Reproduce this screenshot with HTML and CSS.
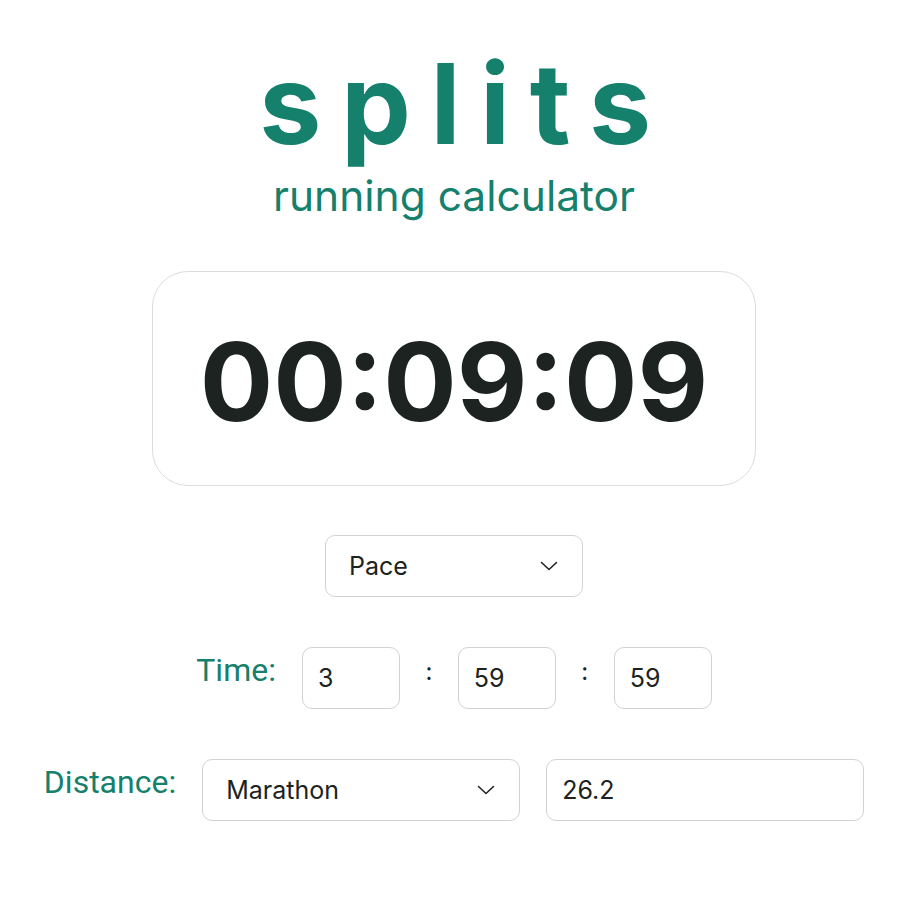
FILE: index.html
```html
<!DOCTYPE html>
<html lang="en">
<head>
<meta charset="utf-8">
<title>splits - running calculator</title>
<link rel="stylesheet" href="styles.css">
</head>
<body>
<main class="app">
  <header class="brand">
    <h1 class="logo">splits</h1>
    <p class="tagline">running calculator</p>
  </header>

  <section class="result">
    <span class="result-value">00:09:09</span>
  </section>

  <div class="select mode-select">
    <span class="select-text">Pace</span>
    <svg class="chevron" width="18" height="10" viewBox="0 0 18 10"><path d="M1.5 1.5 L9 8.5 L16.5 1.5" fill="none" stroke="#222" stroke-width="1.6" stroke-linecap="round" stroke-linejoin="round"/></svg>
  </div>

  <div class="row time-row">
    <label class="row-label">Time:</label>
    <div class="field small"><span class="field-text">3</span></div>
    <span class="colon">:</span>
    <div class="field small"><span class="field-text">59</span></div>
    <span class="colon">:</span>
    <div class="field small"><span class="field-text">59</span></div>
  </div>

  <div class="row distance-row">
    <label class="row-label">Distance:</label>
    <div class="select wide">
      <span class="select-text">Marathon</span>
      <svg class="chevron" width="18" height="10" viewBox="0 0 18 10"><path d="M1.5 1.5 L9 8.5 L16.5 1.5" fill="none" stroke="#222" stroke-width="1.6" stroke-linecap="round" stroke-linejoin="round"/></svg>
    </div>
    <div class="field wide"><span class="field-text">26.2</span></div>
  </div>
</main>
</body>
</html>
```

FILE: styles.css
```css
* { box-sizing: border-box; }

html, body {
  margin: 0;
  padding: 0;
  background: #ffffff;
}

body {
  font-family: Inter, "Noto Sans", sans-serif;
  color: #1c2321;
}

.app {
  display: flex;
  flex-direction: column;
  align-items: center;
  padding: 48px 0 0 8px;
}

.brand {
  display: flex;
  flex-direction: column;
  align-items: center;
}

.logo {
  margin: 0;
  font-family: Inter, sans-serif;
  font-weight: 700;
  font-size: 111px;
  line-height: 112px;
  letter-spacing: 19.5px;
  padding-left: 22px;
  color: #15806b;
}

.tagline {
  margin: 10px 0 0;
  font-family: Inter, sans-serif;
  font-weight: 400;
  font-size: 42.5px;
  line-height: 52px;
  color: #15806b;
}

.result {
  margin-top: 49px;
  width: 604px;
  height: 215px;
  border: 1.5px solid #dcdcdc;
  border-radius: 36px;
  display: flex;
  align-items: center;
  justify-content: center;
}

.result-value {
  font-family: Inter, sans-serif;
  font-weight: 700;
  font-size: 109px;
  color: #1c2321;
  line-height: 1;
  padding-top: 6px;
}

.select,
.field {
  height: 62px;
  border: 1.5px solid #d2d2d2;
  border-radius: 10px;
  background: #fff;
  display: flex;
  align-items: center;
  font-family: Inter, sans-serif;
  font-size: 25px;
  color: #1c2321;
}

.select {
  justify-content: space-between;
  padding: 0 24px 0 23px;
}

.mode-select {
  margin-top: 49px;
  width: 258px;
}

.field {
  padding: 0 15px;
}

.field.small { width: 98px; }
.select.wide, .field.wide { width: 318px; }

.chevron { flex: none; }

.row {
  display: flex;
  align-items: flex-start;
  margin-top: 50px;
  gap: 26px;
}

.row-label {
  font-family: Roboto, sans-serif;
  font-size: 32px;
  color: #15806b;
  line-height: 36px;
  padding-top: 5px;
}

.colon {
  font-family: Inter, sans-serif;
  font-size: 24px;
  color: #1c2321;
  line-height: 30px;
  padding-top: 10px;
  margin: 0 -0.5px;
}
```
